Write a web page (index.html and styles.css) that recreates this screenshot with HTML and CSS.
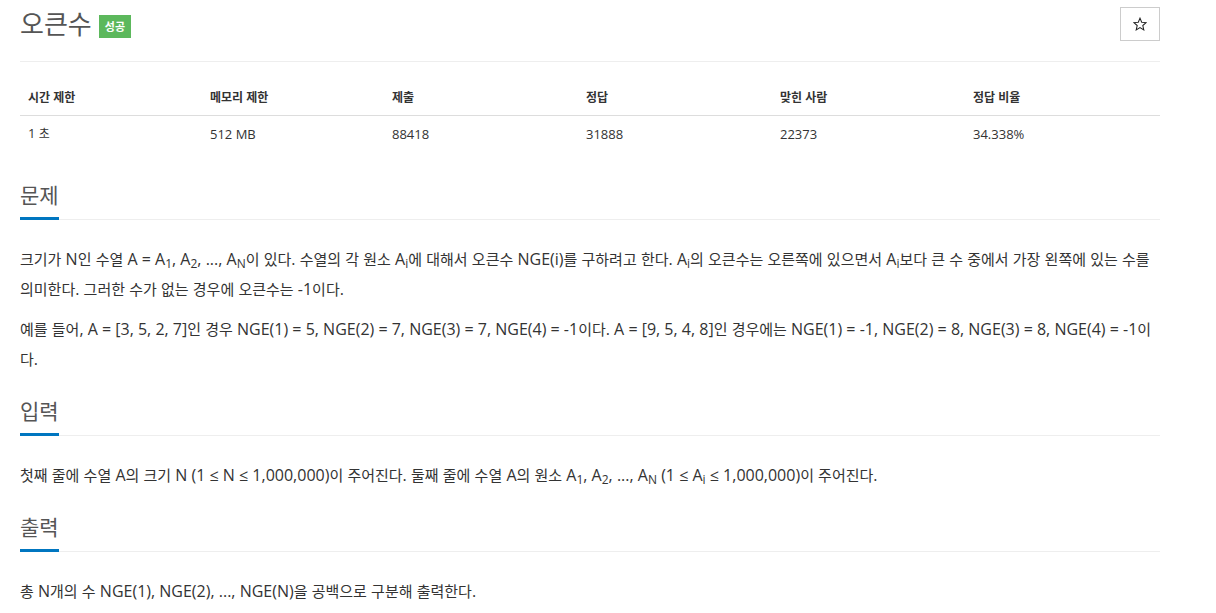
FILE: index.html
```html
<!DOCTYPE html>
<html lang="ko">
<head>
<meta charset="utf-8">
<title>오큰수</title>
<link rel="stylesheet" href="styles.css">
</head>
<body>
<div class="container">
  <div class="title-row">
    <h1 class="title">오큰수</h1>
    <span class="badge">성공</span>
    <button class="star-btn" aria-label="즐겨찾기">
      <svg width="14" height="14" viewBox="0 0 24 24"><polygon points="12,2 14.9,8.9 22.5,9.6 16.8,14.6 18.5,22 12,18.1 5.5,22 7.2,14.6 1.5,9.6 9.1,8.9" fill="none" stroke="#222" stroke-width="1.8" stroke-linejoin="miter"/></svg>
    </button>
  </div>
  <hr class="rule">
  <table class="info">
    <thead>
      <tr><th>시간 제한</th><th>메모리 제한</th><th>제출</th><th>정답</th><th>맞힌 사람</th><th>정답 비율</th></tr>
    </thead>
    <tbody>
      <tr><td>1 <span class="ko-sm">초</span></td><td>512 MB</td><td>88418</td><td>31888</td><td>22373</td><td>34.338%</td></tr>
    </tbody>
  </table>

  <section class="section">
    <h2 class="headline"><span>문제</span></h2>
    <div class="text">
      <p>크기가 <span class="en">N</span>인 수열 <span class="en">A = A<sub>1</sub>, A<sub>2</sub>, ..., A<sub>N</sub></span>이 있다<span class="en">.</span> 수열의 각 원소 <span class="en">A<sub>i</sub></span>에 대해서 오큰수 <span class="en">NGE(i)</span>를 구하려고 한다<span class="en">.</span> <span class="en">A<sub>i</sub></span>의 오큰수는 오른쪽에 있으면서 <span class="en">A<sub>i</sub></span>보다 큰 수 중에서 가장 왼쪽에 있는 수를 의미한다<span class="en">.</span> 그러한 수가 없는 경우에 오큰수는 <span class="en">-1</span>이다<span class="en">.</span></p>
      <p>예를 들어<span class="en">, A = [3, 5, 2, 7]</span>인 경우 <span class="en">NGE(1) = 5, NGE(2) = 7, NGE(3) = 7, NGE(4) = -1</span>이다<span class="en">. A = [9, 5, 4, 8]</span>인 경우에는 <span class="en">NGE(1) = -1, NGE(2) = 8, NGE(3) = 8, NGE(4) = -1</span>이다<span class="en">.</span></p>
    </div>
  </section>

  <section class="section">
    <h2 class="headline"><span>입력</span></h2>
    <div class="text">
      <p>첫째 줄에 수열 <span class="en">A</span>의 크기 <span class="en">N (1 ≤ N ≤ 1,000,000)</span>이 주어진다<span class="en">.</span> 둘째 줄에 수열 <span class="en">A</span>의 원소 <span class="en">A<sub>1</sub>, A<sub>2</sub>, ..., A<sub>N</sub> (1 ≤ A<sub>i</sub> ≤ 1,000,000)</span>이 주어진다<span class="en">.</span></p>
    </div>
  </section>

  <section class="section">
    <h2 class="headline"><span>출력</span></h2>
    <div class="text">
      <p>총 <span class="en">N</span>개의 수 <span class="en">NGE(1), NGE(2), ..., NGE(N)</span>을 공백으로 구분해 출력한다<span class="en">.</span></p>
    </div>
  </section>
</div>
</body>
</html>
```

FILE: styles.css
```css
* { box-sizing: border-box; }
body {
  margin: 0;
  background: #fff;
  color: #333;
  font-family: "Open Sans", "Noto Sans CJK KR", sans-serif;
  font-size: 13px;
}
.container {
  width: 1140px;
  margin-left: 20px;
}
.title-row {
  display: flex;
  align-items: center;
  padding-top: 7px;
  height: 41px;
}
.title {
  margin: 0;
  font-size: 26px;
  font-weight: 400;
  color: #555;
  line-height: 34px;
}
.badge {
  display: inline-block;
  margin-left: 7px;
  margin-top: 4px;
  background: #5cb85c;
  color: #fff;
  font-size: 11px;
  font-weight: 700;
  padding: 0 6px;
  height: 23px;
  line-height: 23px;
}
.star-btn {
  margin-left: auto;
  width: 40px;
  height: 34px;
  border: 1px solid #ccc;
  background: #fff;
  padding: 0;
  display: flex;
  align-items: center;
  justify-content: center;
}
.rule {
  border: 0;
  border-top: 1px solid #eee;
  margin: 20px 0 0;
}
.info {
  width: 100%;
  border-collapse: collapse;
  margin-top: 19px;
  table-layout: fixed;
}
.info th, .info td {
  text-align: left;
  padding: 8px;
  line-height: 18px;
  font-size: 13px;
}
.info th {
  font-size: 12px;
  font-weight: 700;
  border-bottom: 1px solid #ddd;
}
.ko-sm { font-size: 12px; }
.info th:nth-child(1), .info th:nth-child(2) { width: 182px; }
.info th:nth-child(3), .info th:nth-child(4) { width: 194px; }
.info th:nth-child(5) { width: 193px; }
.section {
  margin-top: 24px;
}
.info + .section { margin-top: 31px; }
.headline {
  margin: 0;
  font-size: 21px;
  font-weight: 400;
  color: #555;
  line-height: 26px;
  border-bottom: 1px solid #eee;
  display: flex;
}
.headline span {
  padding-bottom: 9px;
  border-bottom: 3px solid #0076c0;
  margin-bottom: -1px;
}
.text {
  margin-top: 24px;
  font-size: 15px;
  line-height: 30px;
  word-spacing: 0.3px;
}
.text p {
  margin: 0 0 10px;
}
.en { font-size: 16px; word-spacing: 0; }
sub {
  font-size: 75%;
  line-height: 0;
  position: relative;
  vertical-align: baseline;
  bottom: -0.25em;
}
```
